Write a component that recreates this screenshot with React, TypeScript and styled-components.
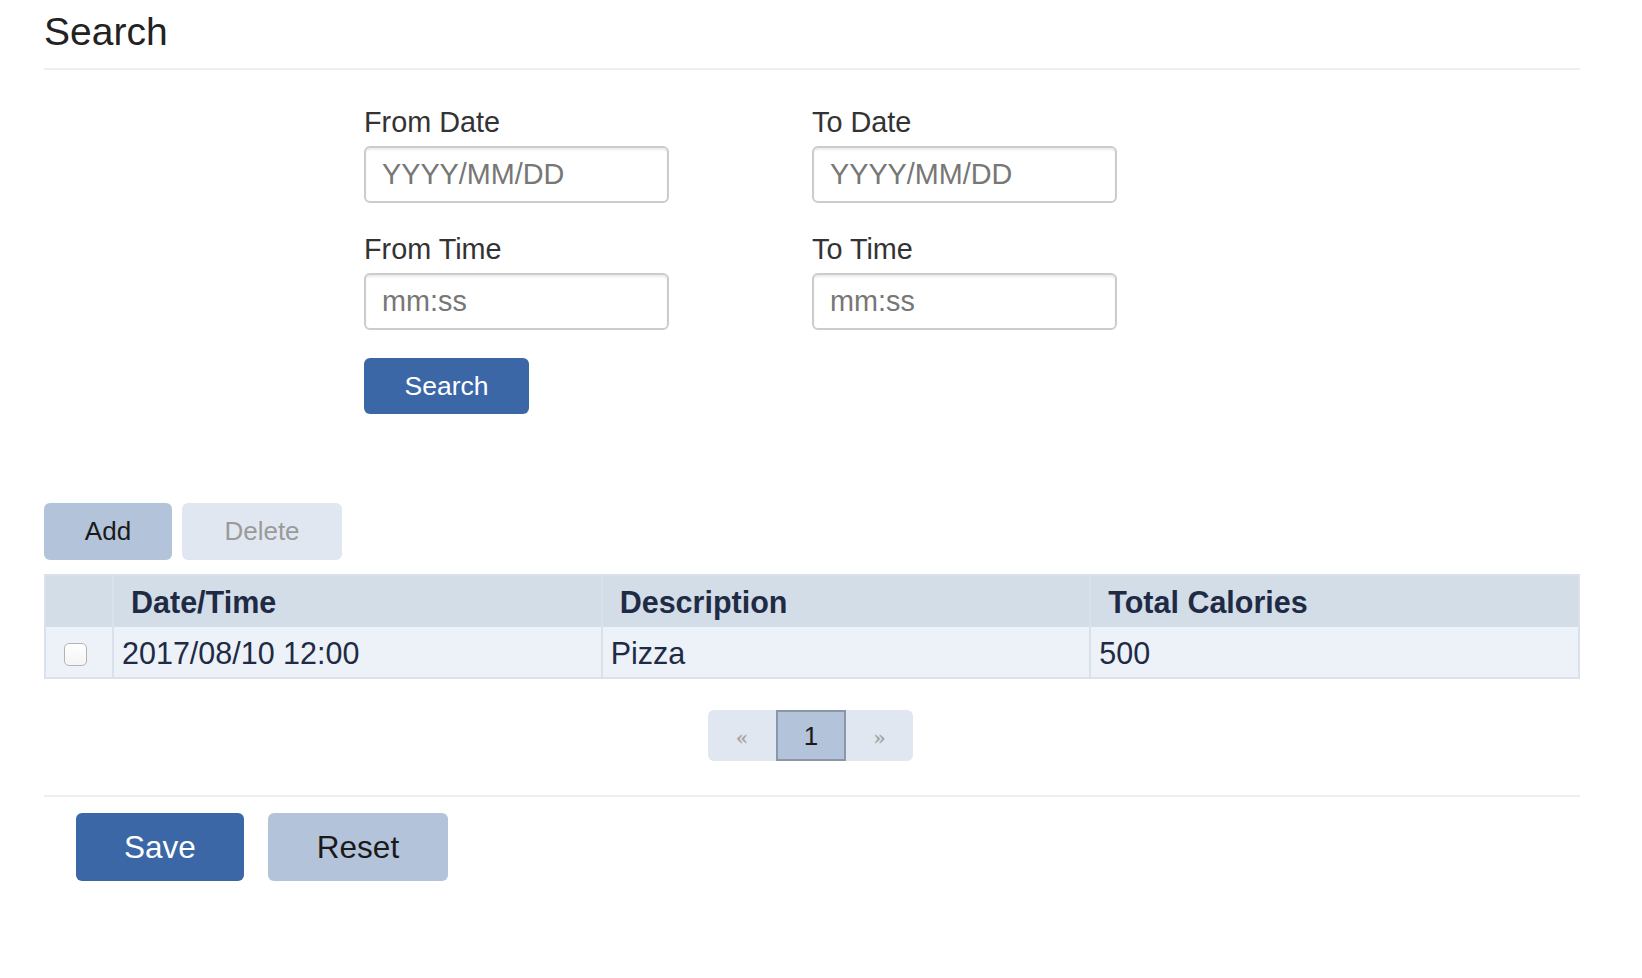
import React from "react";
import styled, { createGlobalStyle } from "styled-components";

const GlobalStyle = createGlobalStyle`
  html, body { margin: 0; padding: 0; background: #ffffff; }
  body {
    font-family: "Liberation Sans", Arial, Helvetica, sans-serif;
    color: #333333;
  }
  * { box-sizing: border-box; }
`;

const Page = styled.div`
  padding: 0 62px 40px 44px;
`;

const Heading = styled.h1`
  margin: 0;
  padding: 10px 0 15px;
  font-size: 39px;
  line-height: 43px;
  font-weight: 400;
  color: #222;
  border-bottom: 2px solid #eeeeee;
`;

const SearchForm = styled.form`
  margin-left: 320px;
  padding-top: 36px;
  display: grid;
  grid-template-columns: 305px 305px;
  column-gap: 143px;
  row-gap: 30px;
`;

const Field = styled.div`
  display: flex;
  flex-direction: column;
`;

const Label = styled.label`
  font-size: 28.8px;
  line-height: 32px;
  margin-bottom: 8px;
  color: #333;
`;

const TextInput = styled.input`
  height: 57px;
  width: 305px;
  padding: 0 16px;
  border: 2px solid #cccccc;
  border-radius: 6px;
  box-shadow: inset 0 2px 2px rgba(0, 0, 0, 0.075);
  font-family: inherit;
  font-size: 28.8px;
  color: #555;
  outline: none;
  &::placeholder { color: #777777; }
`;

const FormActions = styled.div`
  grid-column: 1 / span 2;
  margin-top: -2px;
`;

const Button = styled.button<{ $variant: "primary" | "secondary" | "disabled"; $w: number; $h: number; $fs: number }>`
  width: ${(p) => p.$w}px;
  height: ${(p) => p.$h}px;
  border: none;
  border-radius: 6px;
  font-family: inherit;
  font-size: ${(p) => p.$fs}px;
  cursor: pointer;
  padding: 0;
  background: ${(p) =>
    p.$variant === "primary" ? "#3b67a6" : p.$variant === "secondary" ? "#b3c3da" : "#e1e7f0"};
  color: ${(p) =>
    p.$variant === "primary" ? "#ffffff" : p.$variant === "secondary" ? "#1a1a1a" : "#9a9a9a"};
`;

const Toolbar = styled.div`
  margin-top: 89px;
  display: flex;
  gap: 10px;
`;

const Table = styled.table`
  margin-top: 14px;
  width: 100%;
  border-collapse: collapse;
  border: 2px solid #dbe1ec;
  table-layout: fixed;
  color: #1f2b45;
`;

const HeadCell = styled.th<{ $w?: number }>`
  ${(p) => (p.$w ? `width: ${p.$w}px;` : "")}
  height: 52px;
  padding: 2px 17px 0 17px;
  background: #d3dde8;
  border-left: 2px solid #dbe1ec;
  text-align: left;
  font-size: 30.5px;
  font-weight: 700;
  vertical-align: middle;
`;

const BodyCell = styled.td`
  height: 51px;
  padding: 2px 8px 0 8px;
  background: #edf1f8;
  border-left: 2px solid #dbe1ec;
  font-size: 30.5px;
  vertical-align: middle;
`;

const CheckCell = styled.td`
  height: 51px;
  padding: 5px 0 0 18px;
  background: #edf1f8;
  vertical-align: middle;
`;

const Check = styled.input`
  appearance: none;
  -webkit-appearance: none;
  margin: 0;
  width: 23px;
  height: 23px;
  border: 1.5px solid #b3b3b3;
  border-radius: 5px;
  background: linear-gradient(#ffffff, #f4f4f4);
  display: block;
`;

const PagerWrap = styled.nav`
  margin-top: 31px;
  display: flex;
  justify-content: center;
  padding-right: 3px;
`;

const Pager = styled.ul`
  list-style: none;
  margin: 0;
  padding: 0;
  display: flex;
  background: #e1e7f0;
  border-radius: 6px;
  height: 51px;
`;

const PageItem = styled.li<{ $active?: boolean; $w: number }>`
  width: ${(p) => p.$w}px;
  height: 51px;
  display: flex;
  align-items: center;
  justify-content: center;
  font-size: ${(p) => (p.$active ? "26px" : "20px")};
  color: ${(p) => (p.$active ? "#1a1a1a" : "#a8a8a8")};
  background: ${(p) => (p.$active ? "#b3c3da" : "transparent")};
  border: ${(p) => (p.$active ? "2px solid #8b97a9" : "none")};
  font-family: ${(p) => (p.$active ? "inherit" : '"DejaVu Serif", serif')};
  font-weight: ${(p) => (p.$active ? 400 : 700)};
  padding-top: ${(p) => (p.$active ? "2px" : "4px")};
`;

const Divider = styled.hr`
  margin: 34px 0 0;
  border: none;
  border-top: 2px solid #eeeeee;
`;

const Footer = styled.div`
  margin-top: 16px;
  padding-left: 32px;
  display: flex;
  gap: 24px;
`;

export default function App() {
  return (
    <Page>
      <GlobalStyle />
      <Heading>Search</Heading>
      <SearchForm onSubmit={(e) => e.preventDefault()}>
        <Field>
          <Label>From Date</Label>
          <TextInput placeholder="YYYY/MM/DD" />
        </Field>
        <Field>
          <Label>To Date</Label>
          <TextInput placeholder="YYYY/MM/DD" />
        </Field>
        <Field>
          <Label>From Time</Label>
          <TextInput placeholder="mm:ss" />
        </Field>
        <Field>
          <Label>To Time</Label>
          <TextInput placeholder="mm:ss" />
        </Field>
        <FormActions>
          <Button type="submit" $variant="primary" $w={165} $h={56} $fs={26.5}>
            Search
          </Button>
        </FormActions>
      </SearchForm>

      <Toolbar>
        <Button $variant="secondary" $w={128} $h={57} $fs={26}>
          Add
        </Button>
        <Button $variant="disabled" $w={160} $h={57} $fs={26}>
          Delete
        </Button>
      </Toolbar>

      <Table>
        <thead>
          <tr>
            <HeadCell $w={68} style={{ borderLeft: "none" }} />
            <HeadCell>Date/Time</HeadCell>
            <HeadCell>Description</HeadCell>
            <HeadCell>Total Calories</HeadCell>
          </tr>
        </thead>
        <tbody>
          <tr>
            <CheckCell>
              <Check type="checkbox" />
            </CheckCell>
            <BodyCell>2017/08/10 12:00</BodyCell>
            <BodyCell>Pizza</BodyCell>
            <BodyCell>500</BodyCell>
          </tr>
        </tbody>
      </Table>

      <PagerWrap>
        <Pager>
          <PageItem $w={68}>«</PageItem>
          <PageItem $w={70} $active>
            1
          </PageItem>
          <PageItem $w={67}>»</PageItem>
        </Pager>
      </PagerWrap>

      <Divider />

      <Footer>
        <Button $variant="primary" $w={168} $h={68} $fs={31.5}>
          Save
        </Button>
        <Button $variant="secondary" $w={180} $h={68} $fs={31.5}>
          Reset
        </Button>
      </Footer>
    </Page>
  );
}
